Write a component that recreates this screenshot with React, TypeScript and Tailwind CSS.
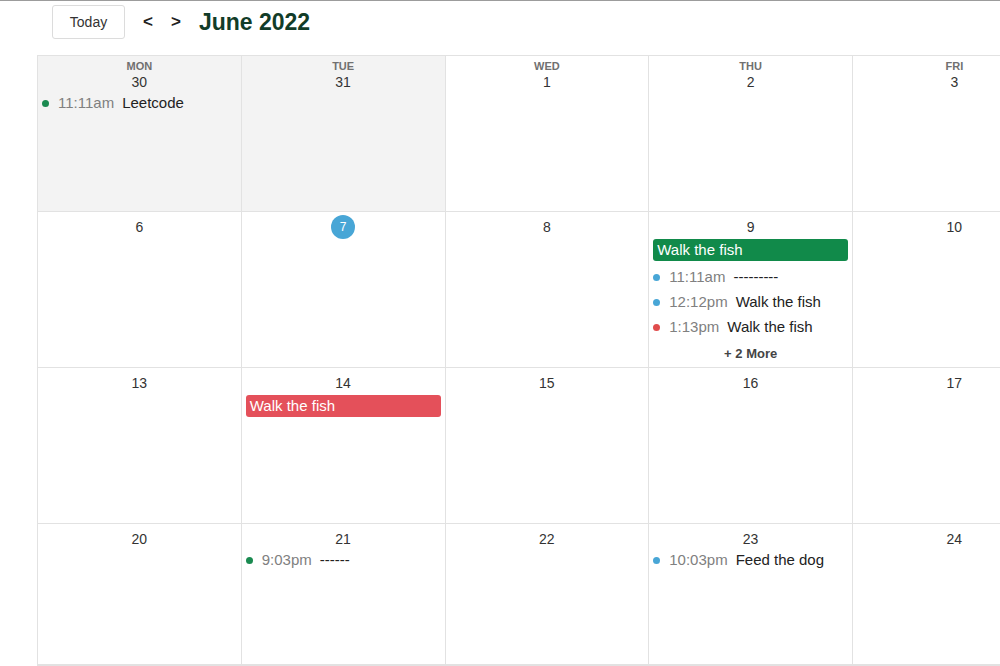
import React from "react";

type Ev = { time: string; title: string; color: string };
type Bar = { title: string; color: string };
type Day = {
  num: number;
  muted?: boolean;
  today?: boolean;
  bar?: Bar;
  events?: Ev[];
  more?: number;
};

const GREEN = "bg-[#1a8a50]";
const BLUE = "bg-[#48a6d6]";
const RED = "bg-[#e04c4c]";

const dows = ["MON", "TUE", "WED", "THU", "FRI"];

const weeks: Day[][] = [
  [
    { num: 30, muted: true, events: [{ time: "11:11am", title: "Leetcode", color: GREEN }] },
    { num: 31, muted: true },
    { num: 1 },
    { num: 2 },
    { num: 3 },
  ],
  [
    { num: 6 },
    { num: 7, today: true },
    { num: 8 },
    {
      num: 9,
      bar: { title: "Walk the fish", color: "bg-[#118a4a]" },
      events: [
        { time: "11:11am", title: "---------", color: BLUE },
        { time: "12:12pm", title: "Walk the fish", color: BLUE },
        { time: "1:13pm", title: "Walk the fish", color: RED },
      ],
      more: 2,
    },
    { num: 10 },
  ],
  [
    { num: 13 },
    { num: 14, bar: { title: "Walk the fish", color: "bg-[#e4505a]" } },
    { num: 15 },
    { num: 16 },
    { num: 17 },
  ],
  [
    { num: 20 },
    { num: 21, events: [{ time: "9:03pm", title: "------", color: GREEN }] },
    { num: 22 },
    { num: 23, events: [{ time: "10:03pm", title: "Feed the dog", color: BLUE }] },
    { num: 24 },
  ],
];

const Cell = ({ day, dow }: { day: Day; dow?: string }) => (
  <div
    className={`flex flex-col border-r border-b border-[#e2e2e2] ${
      dow ? "pt-[3px]" : "pt-[6px]"
    } ${day.muted ? "bg-[#f3f3f3]" : "bg-white"}`}
  >
    {dow && (
      <div className="text-center text-[11px] leading-[14px] font-bold text-[#707070]">{dow}</div>
    )}
    <div className="flex justify-center h-[18px] items-center">
      {day.today ? (
        <span className="flex items-center justify-center w-6 h-6 rounded-full bg-[#48a6d6] text-white text-[12px]">
          {day.num}
        </span>
      ) : (
        <span className="text-[14px] leading-[18px] text-[#333]">{day.num}</span>
      )}
    </div>
    {day.bar && (
      <div
        className={`mx-1 mt-[3px] h-[22px] rounded-[3px] px-1 text-[15px] leading-[22px] text-white ${day.bar.color}`}
      >
        {day.bar.title}
      </div>
    )}
    {day.events && (
      <div className={`flex flex-col ${day.bar ? "mt-[4px]" : ""}`}>
        {day.events.map((e, i) => (
          <div key={i} className="flex items-center h-[25px] pl-[4px] text-[15px]">
            <span className={`w-[7px] h-[7px] rounded-full ${e.color}`} />
            <span className="ml-[9px] text-[#808080]">{e.time}</span>
            <span className="ml-2 text-[#222]">{e.title}</span>
          </div>
        ))}
      </div>
    )}
    {day.more && (
      <div className="mt-[2px] text-center text-[13px] leading-[24px] font-bold text-[#444]">+ {day.more} More</div>
    )}
  </div>
);

export default function App() {
  return (
    <div
      className="w-[1000px] h-[666px] overflow-hidden bg-white border-t border-[#9c9c9c] flex flex-col"
      style={{ fontFamily: '"Liberation Sans", Arial, sans-serif' }}
    >
      <div className="h-[54px] shrink-0 flex items-start pt-[4px] pl-[52px]">
        <button className="w-[73px] h-[34px] border border-[#dcdcdc] rounded-[3px] text-[14px] text-[#333] bg-white">
          Today
        </button>
        <span className="ml-[18px] h-[34px] leading-[34px] text-[17px] font-bold text-[#222]">&lt;</span>
        <span className="ml-[18px] h-[34px] leading-[34px] text-[17px] font-bold text-[#222]">&gt;</span>
        <h1 className="ml-[18px] h-[34px] leading-[34px] text-[23px] font-bold text-[#123c28]">June 2022</h1>
      </div>
      <div className="ml-[37px] flex-1 border-t border-l border-b border-[#e2e2e2] grid grid-cols-[repeat(5,203.75px)] grid-rows-[156px_156px_156px_1fr] w-[1020px]">
        {weeks.map((w, wi) =>
          w.map((d, di) => <Cell key={`${wi}-${di}`} day={d} dow={wi === 0 ? dows[di] : undefined} />)
        )}
      </div>
    </div>
  );
}
